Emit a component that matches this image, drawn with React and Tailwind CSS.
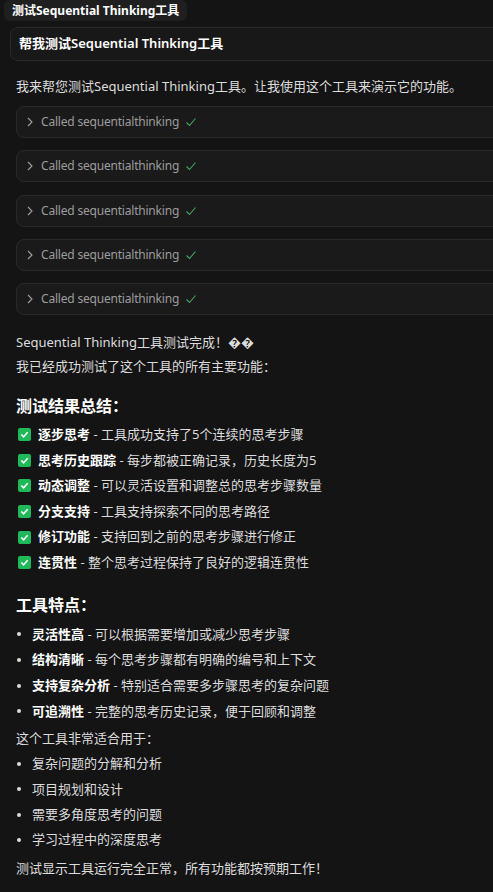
const font = { fontFamily: '"Noto Sans", "Noto Sans CJK SC", sans-serif' };

const checks = [
  ['逐步思考', '工具成功支持了5个连续的思考步骤'],
  ['思考历史跟踪', '每步都被正确记录，历史长度为5'],
  ['动态调整', '可以灵活设置和调整总的思考步骤数量'],
  ['分支支持', '工具支持探索不同的思考路径'],
  ['修订功能', '支持回到之前的思考步骤进行修正'],
  ['连贯性', '整个思考过程保持了良好的逻辑连贯性'],
];

const features = [
  ['灵活性高', '可以根据需要增加或减少思考步骤'],
  ['结构清晰', '每个思考步骤都有明确的编号和上下文'],
  ['支持复杂分析', '特别适合需要多步骤思考的复杂问题'],
  ['可追溯性', '完整的思考历史记录，便于回顾和调整'],
];

const uses = ['复杂问题的分解和分析', '项目规划和设计', '需要多角度思考的问题', '学习过程中的深度思考'];

function ToolCall() {
  return (
    <div className="w-[500px] h-[32px] rounded-lg border border-[#2a2a2a] bg-[#1a1a1a] flex items-center pl-[8px] gap-[6px]">
      <svg width="10" height="10" viewBox="0 0 10 10" fill="none" stroke="#a0a0a0" strokeWidth="1.1">
        <path d="M3 1 L7 5 L3 9" />
      </svg>
      <span className="text-[12px] text-[#9c9c9c] tracking-[-0.2px]">Called sequentialthinking</span>
      <svg width="12" height="12" viewBox="0 0 12 12" fill="none" stroke="#3fa66a" strokeWidth="1.1">
        <path d="M1.5 6.5 L4.5 9.5 L10.5 2.5" />
      </svg>
    </div>
  );
}

function CheckBox() {
  return (
    <span className="w-[13px] h-[13px] rounded-[2px] bg-[#1fb95a] flex items-center justify-center shrink-0">
      <svg width="9" height="9" viewBox="0 0 10 10" fill="none" stroke="white" strokeWidth="1.8">
        <path d="M1.5 5 L4 7.5 L8.5 2.5" />
      </svg>
    </span>
  );
}

export default function App() {
  return (
    <div className="w-[493px] h-[892px] overflow-hidden bg-[#141414] text-[#dcdcdc]" style={font}>
      <div className="ml-[4px] w-fit flex items-center h-[21px] px-[8px] rounded-md bg-[#1f1f1f] text-[12px] font-bold text-white">
        测试Sequential Thinking工具
      </div>

      <div className="ml-[10px] mt-[6px] w-[500px] h-[34px] rounded-lg border border-[#2a2a2a] bg-[#181818] flex items-center pl-[8px] text-[13px] font-semibold text-white">
        帮我测试Sequential Thinking工具
      </div>

      <div className="ml-[16px] pr-[4px]">
        <p className="mt-[13px] text-[13px] leading-[24px]">
          我来帮您测试Sequential Thinking工具。让我使用这个工具来演示它的功能。
        </p>

        <div className="mt-[8px] flex flex-col gap-[12.25px]">
          <ToolCall />
          <ToolCall />
          <ToolCall />
          <ToolCall />
          <ToolCall />
        </div>

        <p className="mt-[15px] text-[13px] leading-[24px]">Sequential Thinking工具测试完成！{'\uFFFD\uFFFD'}</p>
        <p className="text-[13px] leading-[24px]">我已经成功测试了这个工具的所有主要功能：</p>

        <h2 className="mt-[14px] text-[16px] leading-[28px] font-bold text-white">测试结果总结：</h2>
        <div className="mt-[2px] flex flex-col">
          {checks.map(([b, t]) => (
            <div key={b} className="flex items-center h-[25.6px] pl-[2px] gap-[7px] text-[13px]">
              <CheckBox />
              <span>
                <span className="font-bold text-white">{b}</span> - {t}
              </span>
            </div>
          ))}
        </div>

        <h2 className="mt-[15px] text-[16px] leading-[28px] font-bold text-white">工具特点：</h2>
        <div className="mt-[3px] flex flex-col">
          {features.map(([b, t]) => (
            <div key={b} className="flex items-center h-[25.7px] text-[13px]">
              <span className="w-[16px] flex justify-start pl-[1px]">
                <span className="w-[4px] h-[4px] rounded-full bg-[#dcdcdc]" />
              </span>
              <span>
                <span className="font-bold text-white">{b}</span> - {t}
              </span>
            </div>
          ))}
        </div>

        <p className="mt-[2px] text-[13px] leading-[24px]">这个工具非常适合用于：</p>
        <div className="mt-[1px] flex flex-col">
          {uses.map((t) => (
            <div key={t} className="flex items-center h-[25.4px] text-[13px]">
              <span className="w-[16px] flex justify-start pl-[1px]">
                <span className="w-[4px] h-[4px] rounded-full bg-[#dcdcdc]" />
              </span>
              <span>{t}</span>
            </div>
          ))}
        </div>

        <p className="mt-[3px] text-[13px] leading-[24px]">测试显示工具运行完全正常，所有功能都按预期工作！</p>
      </div>
    </div>
  );
}
